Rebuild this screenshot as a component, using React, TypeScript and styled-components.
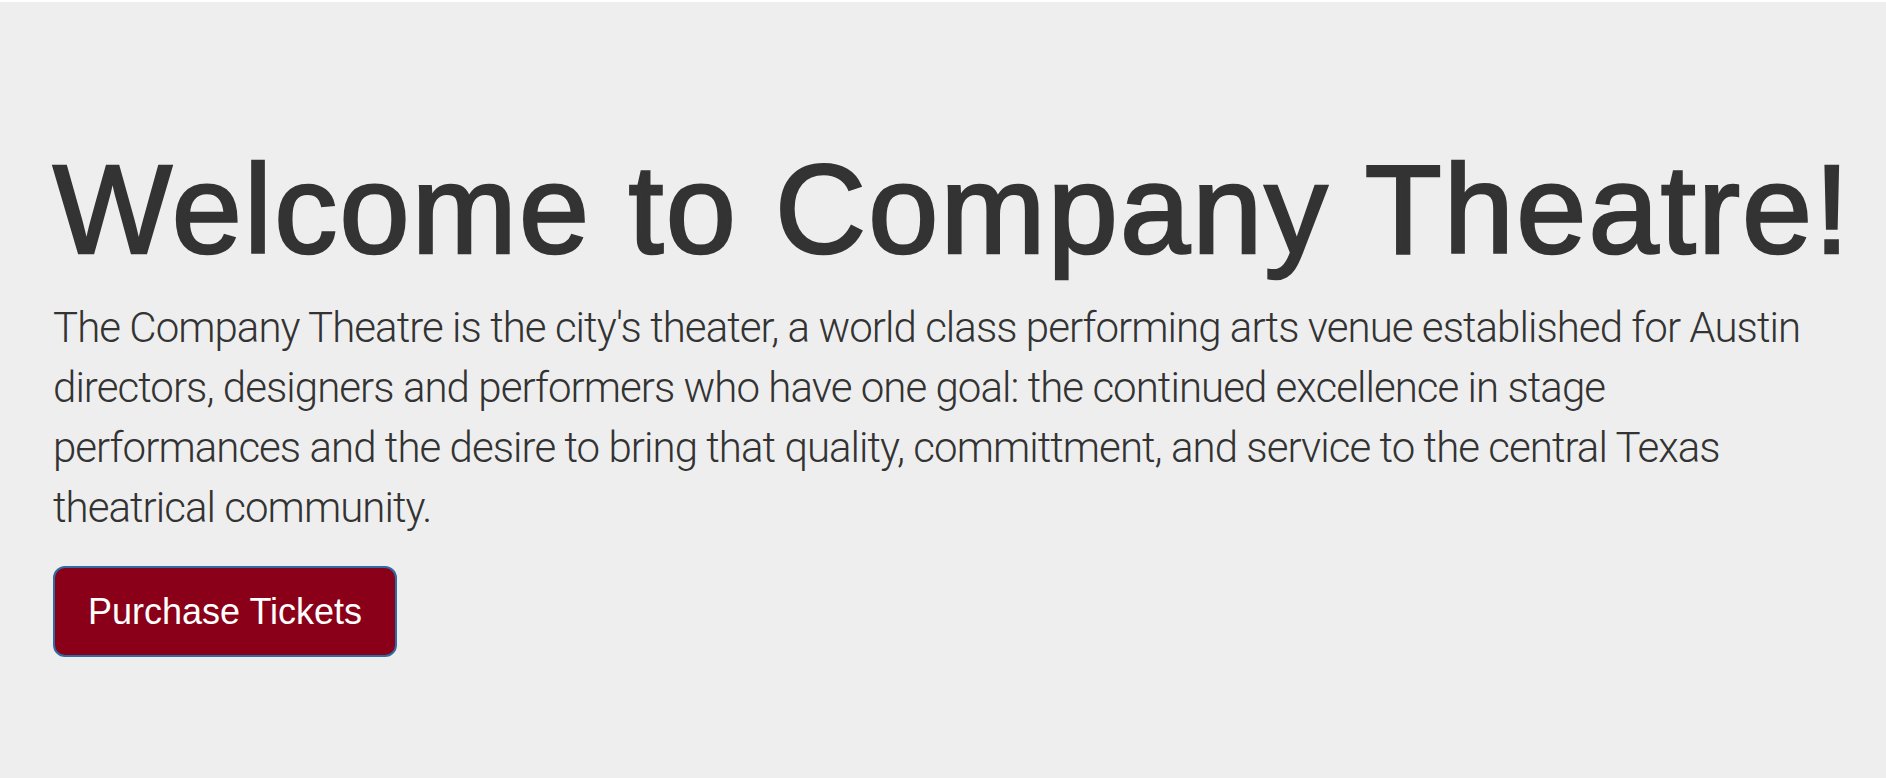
import React from "react";
import styled, { createGlobalStyle } from "styled-components";

const GlobalStyle = createGlobalStyle`
  html, body { margin: 0; padding: 0; background: #eeeeee; }
  body { font-family: "Liberation Sans", Arial, sans-serif; color: #333333; }
`;

const Page = styled.div`
  border-top: 2px solid #ffffff;
  background: #eeeeee;
  min-height: 776px;
`;

const Jumbotron = styled.section`
  padding: 139px 53px 0 53px;
`;

const Title = styled.h1`
  margin: 0;
  font-family: "Liberation Sans", Arial, sans-serif;
  font-weight: 400;
  font-size: 126px;
  line-height: 1.1;
  letter-spacing: 2.2px;
  color: #333333;
  -webkit-text-stroke: 2.6px #333333;
  white-space: nowrap;
`;

const Lead = styled.p`
  margin: 18px 0 28px 0;
  font-family: "Roboto", "Liberation Sans", sans-serif;
  font-weight: 300;
  font-size: 42px;
  line-height: 60px;
  letter-spacing: -0.95px;
  color: #333333;
`;

const TicketButton = styled.a`
  display: inline-block;
  box-sizing: border-box;
  padding: 20px 33px;
  border: 2px solid #2e6da4;
  border-radius: 12px;
  background: #8b0019;
  color: #ffffff;
  font-family: "Liberation Sans", Arial, sans-serif;
  font-size: 36px;
  line-height: 47px;
  text-decoration: none;
  cursor: pointer;
`;

export default function App() {
  return (
    <>
      <GlobalStyle />
      <Page>
        <Jumbotron>
          <Title>Welcome to Company Theatre!</Title>
          <Lead>
            The Company Theatre is the city's theater, a world class performing arts venue established for Austin directors, designers and performers who have one goal: the continued excellence in stage performances and the desire to bring that quality, committment, and service to the central Texas theatrical community.
          </Lead>
          <TicketButton href="#">Purchase Tickets</TicketButton>
        </Jumbotron>
      </Page>
    </>
  );
}
